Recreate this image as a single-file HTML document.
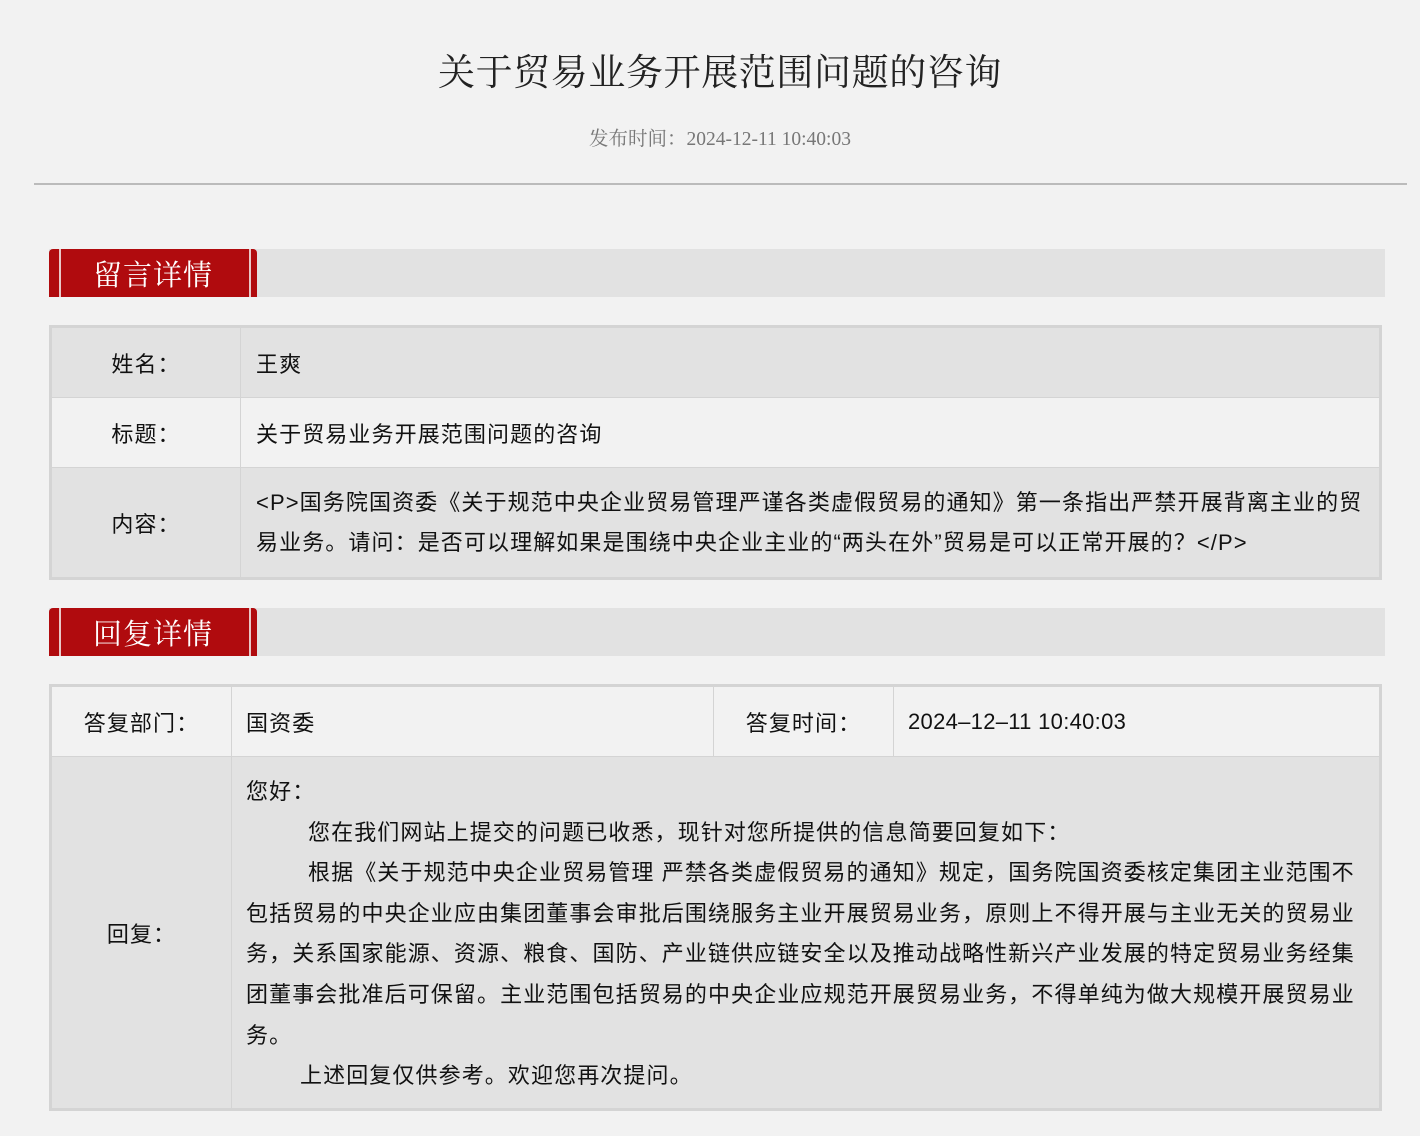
<!DOCTYPE html>
<html><head><meta charset="utf-8"><style>
*{margin:0;padding:0;box-sizing:border-box}
body{width:1420px;height:1136px;background:#f2f2f2;position:relative;overflow:hidden;font-family:"Liberation Sans","Noto Sans CJK SC",sans-serif;color:#111}
.a{position:absolute}
.title{left:0;width:1440px;top:50px;text-align:center;font:37px/48px "Liberation Serif","Noto Serif CJK SC",serif;letter-spacing:0.6px;color:#222}
.date{left:0;width:1440px;top:128px;text-align:center;font:19.5px/24px "Liberation Serif","Noto Serif CJK SC",serif;color:#777}
.hr{left:34px;width:1373px;top:183px;height:2px;background:#bbb}
.band{left:49px;width:1336px;height:48px;background:#e2e2e2}
.tab{left:49px;width:208px;height:48px;background:#b00b0e;border-radius:4px 4px 0 0}
.tab i{position:absolute;top:0;bottom:0;width:2px;background:#e8c8c8}
.tab span{position:absolute;left:0;right:0;top:7px;text-align:center;color:#fff;font:29px/36px "Noto Serif CJK SC",serif;letter-spacing:1px}
.c{position:absolute;border:1px solid #d4d4d4;font-size:22px;letter-spacing:1.1px;display:flex;align-items:center}
b{display:inline-block;font-weight:normal}
</style></head><body>
<div class="a title">关于贸易业务开展范围问题的咨询</div>
<div class="a date">发布时间：2024-12-11 10:40:03</div>
<div class="a hr"></div>

<div class="a band" style="top:249px"></div>
<div class="a tab" style="top:249px"><i style="left:10px"></i><i style="right:6px"></i><span>留言详情</span></div>

<div class="a" style="left:49px;top:325px;width:1333px;height:255px;border:2px solid #d4d4d4"></div>
<div class="c" style="left:51px;top:327px;width:190px;height:71px;background:#e2e2e2;justify-content:center">姓名：</div>
<div class="c" style="left:240px;top:327px;width:1140px;height:71px;background:#e2e2e2;padding-left:15px">王爽</div>
<div class="c" style="left:51px;top:397px;width:190px;height:71px;background:#f2f2f2;justify-content:center">标题：</div>
<div class="c" style="left:240px;top:397px;width:1140px;height:71px;background:#f2f2f2;padding-left:15px">关于贸易业务开展范围问题的咨询</div>
<div class="c" style="left:51px;top:467px;width:190px;height:111px;background:#e2e2e2;justify-content:center">内容：</div>
<div class="c" style="left:240px;top:467px;width:1140px;height:111px;background:#e2e2e2;padding:0 10px 0 15px;line-height:40px">&lt;P&gt;国务院国资委《关于规范中央企业贸易管理严谨各类虚假贸易的通知》第一条指出严禁开展背离主业的贸易业务。请问：是否可以理解如果是围绕中央企业主业的“两头在外”贸易是可以正常开展的？&lt;/P&gt;</div>

<div class="a band" style="top:608px"></div>
<div class="a tab" style="top:608px"><i style="left:10px"></i><i style="right:6px"></i><span>回复详情</span></div>

<div class="a" style="left:49px;top:684px;width:1333px;height:427px;border:2px solid #d4d4d4"></div>
<div class="c" style="left:51px;top:686px;width:181px;height:71px;background:#f2f2f2;justify-content:center">答复部门：</div>
<div class="c" style="left:231px;top:686px;width:483px;height:71px;background:#f2f2f2;padding-left:14px">国资委</div>
<div class="c" style="left:713px;top:686px;width:181px;height:71px;background:#f2f2f2;justify-content:center">答复时间：</div>
<div class="c" style="left:893px;top:686px;width:487px;height:71px;background:#f2f2f2;padding-left:14px;letter-spacing:0.3px">2024–12–11 10:40:03</div>
<div class="c" style="left:51px;top:756px;width:181px;height:353px;background:#e2e2e2;justify-content:center">回复：</div>
<div class="c" style="left:231px;top:756px;width:1149px;height:353px;background:#e2e2e2;padding:15px 14px 0 14px;line-height:40.6px;display:block">您好：<br><b style="width:62px"></b>您在我们网站上提交的问题已收悉，现针对您所提供的信息简要回复如下：<br><b style="width:62px"></b>根据《关于规范中央企业贸易管理 严禁各类虚假贸易的通知》规定，国务院国资委核定集团主业范围不包括贸易的中央企业应由集团董事会审批后围绕服务主业开展贸易业务，原则上不得开展与主业无关的贸易业务，关系国家能源、资源、粮食、国防、产业链供应链安全以及推动战略性新兴产业发展的特定贸易业务经集团董事会批准后可保留。主业范围包括贸易的中央企业应规范开展贸易业务，不得单纯为做大规模开展贸易业务。<br><b style="width:54px"></b>上述回复仅供参考。欢迎您再次提问。</div>
</body></html>
